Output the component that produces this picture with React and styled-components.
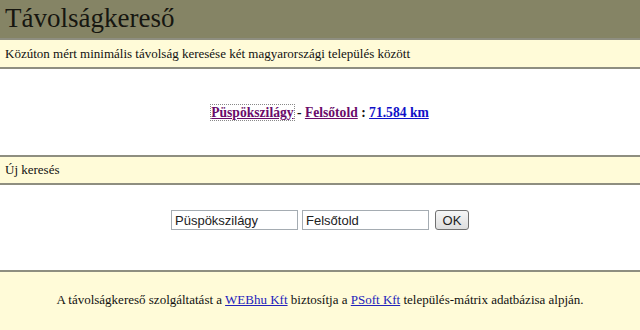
import React from "react";
import styled, { createGlobalStyle } from "styled-components";

const Global = createGlobalStyle`
  html, body { margin: 0; padding: 0; background: #fff; }
  body { font-family: "Liberation Serif", "Times New Roman", serif; color: #111; }
`;

const Page = styled.div`
  display: flex;
  flex-direction: column;
  width: 640px;
  height: 330px;
  overflow: hidden;
`;

const Header = styled.h1`
  margin: 0;
  height: 38px;
  background: #858465;
  font-weight: normal;
  font-size: 27px;
  line-height: 36px;
  padding-left: 5px;
  color: #161610;
  border-bottom: 2px solid #8e8e80;
`;

const Bar = styled.div`
  display: flex;
  align-items: center;
  height: ${(p) => p.$h}px;
  background: #fffbd8;
  padding-left: 5px;
  font-size: 13px;
  border-top: ${(p) => (p.$top ? "2px solid #8e8e80" : "none")};
  border-bottom: 2px solid #8e8e80;
`;

const Section = styled.div`
  display: flex;
  align-items: ${(p) => (p.$top ? "flex-start" : "center")};
  justify-content: center;
  box-sizing: border-box;
  padding-top: ${(p) => p.$top || 0}px;
  height: ${(p) => p.$h}px;
`;

const Result = styled.div`
  font-weight: bold;
  font-size: 13.6px;
  margin-top: 1px;
`;

const Place = styled.a`
  color: #6a0a6a;
  text-decoration: underline;
  outline: ${(p) => (p.$focus ? "1px dotted #888" : "none")};
`;

const Dist = styled.a`
  color: #1010c8;
  text-decoration: underline;
`;

const Form = styled.form`
  display: flex;
  align-items: center;
  gap: 4px;
  margin: 0;
`;

const Input = styled.input`
  box-sizing: border-box;
  width: 127px;
  height: 20px;
  border: 1px solid #a5acb2;
  padding: 1px 3px;
  font-family: "Liberation Sans", Arial, sans-serif;
  font-size: 13px;
  color: #222;
`;

const Button = styled.button`
  box-sizing: border-box;
  margin-left: 2px;
  width: 34px;
  height: 20px;
  border: 1px solid #707070;
  border-radius: 3px;
  background: linear-gradient(#f6f6f6, #dedede);
  font-family: "Liberation Sans", Arial, sans-serif;
  font-size: 13px;
  color: #222;
  padding: 0;
`;

const Footer = styled.div`
  display: flex;
  align-items: center;
  justify-content: center;
  flex: 1;
  background: #fffbd8;
  border-top: 2px solid #8e8e80;
  font-size: 13px;
  padding-bottom: 2px;
`;

const FootLink = styled.a`
  color: #2222bb;
  text-decoration: underline;
`;

export default function App() {
  return (
    <Page>
      <Global />
      <Header>Távolságkereső</Header>
      <Bar $h={27}>Közúton mért minimális távolság keresése két magyarországi település között</Bar>
      <Section $h={86}>
        <Result>
          <Place href="#" $focus>Püspökszilágy</Place> - <Place href="#">Felsőtold</Place> :{" "}
          <Dist href="#">71.584 km</Dist>
        </Result>
      </Section>
      <Bar $h={26} $top>Új keresés</Bar>
      <Section $h={85} $top={25}>
        <Form onSubmit={(e) => e.preventDefault()}>
          <Input defaultValue="Püspökszilágy" />
          <Input defaultValue="Felsőtold" />
          <Button type="submit">OK</Button>
        </Form>
      </Section>
      <Footer>
        <span>
          A távolságkereső szolgáltatást a <FootLink href="#">WEBhu Kft</FootLink> biztosítja a{" "}
          <FootLink href="#">PSoft Kft</FootLink> település-mátrix adatbázisa alpján.
        </span>
      </Footer>
    </Page>
  );
}
